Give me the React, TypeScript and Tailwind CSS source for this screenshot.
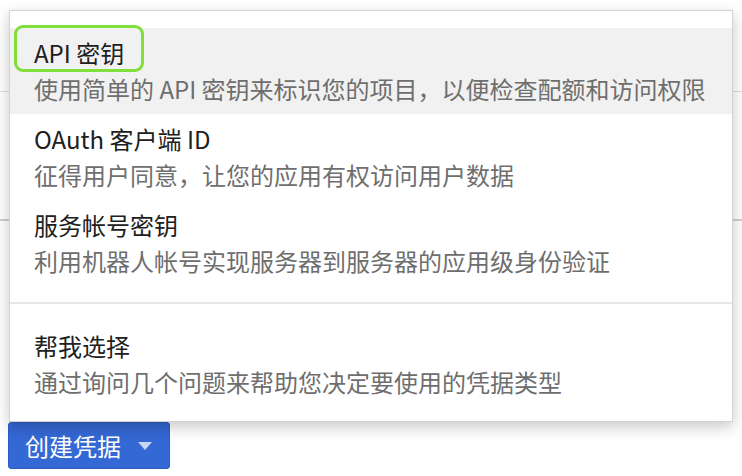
import { useState } from "react";

const ITEMS = [
  { title: "API 密钥", desc: "使用简单的 API 密钥来标识您的项目，以便检查配额和访问权限" },
  { title: "OAuth 客户端 ID", desc: "征得用户同意，让您的应用有权访问用户数据" },
  { title: "服务帐号密钥", desc: "利用机器人帐号实现服务器到服务器的应用级身份验证" },
];

const font = { fontFamily: '"Noto Sans CJK SC", "Liberation Sans", sans-serif' };

function MenuItem({ title, desc, active, onHover }: { title: string; desc: string; active: boolean; onHover: () => void }) {
  return (
    <div
      onMouseEnter={onHover}
      className={`px-[24px] py-[7px] cursor-pointer whitespace-nowrap ${active ? "bg-[#f1f1f1]" : "bg-white"}`}
    >
      <div className="text-[24px] leading-[36px] text-[#202020]">{title}</div>
      <div className="text-[24px] leading-[36px] text-[#6e6e6e]">{desc}</div>
    </div>
  );
}

export default function App() {
  const [active, setActive] = useState(0);

  return (
    <div className="relative w-[742px] h-[476px] bg-white overflow-hidden" style={font}>
      {/* page underneath the menu */}
      <div className="h-[92px] border-b border-[#dedede]" />
      <div className="h-[129px] border-b-2 border-[#cfcfcf]" />
      <div className="h-[201px]" />
      <button className="ml-[8px] flex items-center h-[47px] w-[162px] pl-[16px] rounded-[3px] bg-[#3468d4] border border-[#2d5cc4] text-white text-[24px] leading-none">
        <span>创建凭据</span>
        <span className="ml-[17px] w-0 h-0 border-l-[7px] border-r-[7px] border-t-[8px] border-l-transparent border-r-transparent border-t-[#c9d6f2]" />
      </button>

      {/* dropdown menu */}
      <div className="absolute left-[9px] top-[10px] w-[724px] border border-[#d3d3d3] bg-white pt-[17px] pb-[14px] shadow-[0_5px_14px_rgba(0,0,0,0.22)]">
        {ITEMS.map((it, i) => (
          <MenuItem key={it.title} title={it.title} desc={it.desc} active={active === i} onHover={() => setActive(i)} />
        ))}
        <div className="mt-[16px] mb-[17px] h-[2px] bg-[#e6e6e6]" />
        <MenuItem
          title="帮我选择"
          desc="通过询问几个问题来帮助您决定要使用的凭据类型"
          active={active === 3}
          onHover={() => setActive(3)}
        />
        <div className="absolute left-[4px] top-[14px] w-[130px] h-[47px] rounded-[9px] border-[3px] border-[#7fe03c] pointer-events-none" />
      </div>
    </div>
  );
}
